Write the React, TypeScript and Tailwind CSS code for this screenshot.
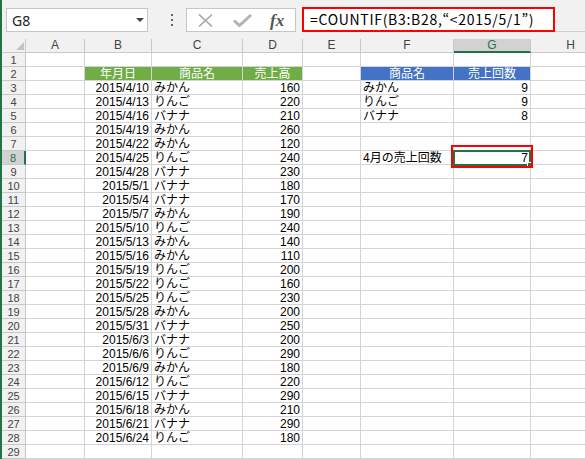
import type { ReactNode } from 'react';

type Row = [string, string, string, string?, string?];

const rows: Row[] = [
  ['2015/4/10', 'みかん', '160', 'みかん', '9'],
  ['2015/4/13', 'りんご', '220', 'りんご', '9'],
  ['2015/4/16', 'バナナ', '210', 'バナナ', '8'],
  ['2015/4/19', 'みかん', '260'],
  ['2015/4/22', 'みかん', '120'],
  ['2015/4/25', 'りんご', '240', '4月の売上回数', '7'],
  ['2015/4/28', 'バナナ', '230'],
  ['2015/5/1', 'バナナ', '180'],
  ['2015/5/4', 'バナナ', '170'],
  ['2015/5/7', 'みかん', '190'],
  ['2015/5/10', 'りんご', '240'],
  ['2015/5/13', 'みかん', '140'],
  ['2015/5/16', 'みかん', '110'],
  ['2015/5/19', 'りんご', '200'],
  ['2015/5/22', 'りんご', '160'],
  ['2015/5/25', 'りんご', '230'],
  ['2015/5/28', 'みかん', '200'],
  ['2015/5/31', 'バナナ', '250'],
  ['2015/6/3', 'バナナ', '200'],
  ['2015/6/6', 'りんご', '290'],
  ['2015/6/9', 'みかん', '180'],
  ['2015/6/12', 'りんご', '220'],
  ['2015/6/15', 'バナナ', '290'],
  ['2015/6/18', 'みかん', '210'],
  ['2015/6/21', 'バナナ', '290'],
  ['2015/6/24', 'りんご', '180'],
];

const columns = ['A', 'B', 'C', 'D', 'E', 'F', 'G', 'H'];

const cellBase =
  'h-[14px] border-r border-b border-[#d4d4d4] text-[12px] leading-[14px] whitespace-nowrap px-[2px] text-black';

function Cell({ children, className = '' }: { children?: ReactNode; className?: string }) {
  return <div className={`${cellBase} ${className}`}>{children}</div>;
}

function RowHeader({ n, active }: { n: number; active?: boolean }) {
  return (
    <div
      className={`h-[14px] text-center text-[11px] leading-[14px] font-['Liberation_Sans',sans-serif] ${
        active
          ? 'bg-[#d2d2d2] text-[#217346] border-r-2 border-r-[#217346] border-b border-b-[#c8c8c8]'
          : 'bg-[#f1f1f1] text-[#444] border-r border-b border-[#c8c8c8]'
      }`}
    >
      {n}
    </div>
  );
}

function FormulaBar() {
  return (
    <div className="h-[42px] bg-[#f1f1f1] flex items-start pt-[8px] pl-[4px]">
      {/* Name box */}
      <div className="w-[142px] h-[24px] bg-white border border-[#c6c6c6] flex items-center justify-between pl-[5px] pr-[3px]">
        <span className="text-[14px] text-[#222] font-['Noto_Sans',sans-serif]">G8</span>
        <span className="w-0 h-0 border-l-[4px] border-r-[4px] border-t-[4px] border-l-transparent border-r-transparent border-t-[#444]" />
      </div>
      {/* drag dots */}
      <div className="w-[38px] h-[24px] flex flex-col justify-center gap-[3px] pl-[23px]">
        <span className="w-[2px] h-[2px] bg-[#666]" />
        <span className="w-[2px] h-[2px] bg-[#666]" />
        <span className="w-[2px] h-[2px] bg-[#666]" />
      </div>
      {/* cancel / enter / fx */}
      <div className="w-[110px] h-[24px] bg-white border border-[#c6c6c6] flex items-center pl-[11px]">
        <svg width="15" height="13" viewBox="0 0 15 13" className="shrink-0">
          <path d="M1 0.5 L14 12.5 M14 0.5 L1 12.5" stroke="#a6a6a6" strokeWidth="1.6" fill="none" />
        </svg>
        <svg width="19" height="13" viewBox="0 0 19 13" className="ml-[20px] shrink-0">
          <path d="M1 6.5 L6.5 11.5 L18 1" stroke="#b3b3b3" strokeWidth="3" fill="none" />
        </svg>
        <span className="ml-[18px] italic font-bold text-[17px] leading-none text-[#555] font-['Liberation_Serif',serif]">
          fx
        </span>
      </div>
      {/* formula input */}
      <div className="ml-[6px] -mt-[1px] w-[253px] h-[25px] bg-white border-2 border-[#ff0000] flex items-center pl-[6px]">
        <span
          lang="ja"
          className="text-[14px] tracking-[0.7px] text-black font-['Noto_Sans_CJK_JP',sans-serif]"
        >
          =COUNTIF(B3:B28,“&lt;2015/5/1”)
        </span>
      </div>
      <div className="flex-1 h-[24px] border-b border-[#d0d0d0]" />
    </div>
  );
}

export default function App() {
  return (
    <div className="w-[585px] h-[459px] overflow-hidden bg-white flex" lang="ja">
      <div className="w-[2px] bg-[#217346] shrink-0" />
      <div className="flex-1 flex flex-col min-w-0">
        <FormulaBar />
        <div className="grid grid-cols-[24px_59px_67px_91px_60px_58px_93px_77px_80px] auto-rows-[14px] font-['Liberation_Sans','Noto_Sans_CJK_JP',sans-serif]">
          {/* column header row */}
          <div className="h-[14px] bg-[#f1f1f1] border-r border-b border-[#c8c8c8] flex items-end justify-end pr-[1px] pb-[2px]">
            <svg width="8" height="8" viewBox="0 0 8 8">
              <polygon points="8,0 8,8 0,8" fill="#c3c3c3" />
            </svg>
          </div>
          {columns.map((c) =>
            c === 'G' ? (
              <div
                key={c}
                className="h-[14px] bg-[#d2d2d2] text-[#217346] border-r border-r-[#c8c8c8] border-b-2 border-b-[#217346] text-center text-[12px] leading-[13px]"
              >
                {c}
              </div>
            ) : (
              <div
                key={c}
                className="h-[14px] bg-[#f1f1f1] text-[#444] border-r border-b border-[#c8c8c8] text-center text-[12px] leading-[13px]"
              >
                {c}
              </div>
            )
          )}

          {/* row 1 */}
          <RowHeader n={1} />
          {columns.map((c) => (
            <Cell key={c} />
          ))}

          {/* row 2: table headers */}
          <RowHeader n={2} />
          <Cell />
          <Cell className="bg-[#70ad47] border-[#70ad47] text-white text-center">年月日</Cell>
          <Cell className="bg-[#70ad47] border-[#70ad47] text-white text-center">商品名</Cell>
          <Cell className="bg-[#70ad47] border-[#70ad47] text-white text-center">売上高</Cell>
          <Cell />
          <Cell className="bg-[#4472c4] border-[#4472c4] text-white text-center">商品名</Cell>
          <Cell className="bg-[#4472c4] border-[#4472c4] text-white text-center">売上回数</Cell>
          <Cell />

          {rows.map((r, i) => {
            const n = i + 3;
            const selected = n === 8;
            return [
              <RowHeader key={`h${n}`} n={n} active={selected} />,
              <Cell key={`a${n}`} />,
              <Cell key={`b${n}`} className="text-right">
                {r[0]}
              </Cell>,
              <Cell key={`c${n}`}>{r[1]}</Cell>,
              <Cell key={`d${n}`} className="text-right">
                {r[2]}
              </Cell>,
              <Cell key={`e${n}`} />,
              <Cell key={`f${n}`}>{r[3]}</Cell>,
              <Cell key={`g${n}`} className={`text-right ${selected ? 'relative' : ''}`}>
                {r[4]}
                {selected && (
                  <>
                    <span className="absolute -left-[1px] -top-[1px] -right-[1px] -bottom-[2px] border-2 border-[#217346]" />
                    <span className="absolute -right-[3px] -bottom-[4px] w-[6px] h-[6px] bg-[#217346] border border-white" />
                    <span className="absolute -left-[3px] -top-[6px] -right-[3px] -bottom-[4px] border-2 border-[#ff0000]" />
                  </>
                )}
              </Cell>,
              <Cell key={`h2${n}`} />,
            ];
          })}

          {/* row 29 (cut off) */}
          <RowHeader n={29} />
          {columns.map((c) => (
            <Cell key={`r29${c}`} />
          ))}
        </div>
      </div>
    </div>
  );
}
